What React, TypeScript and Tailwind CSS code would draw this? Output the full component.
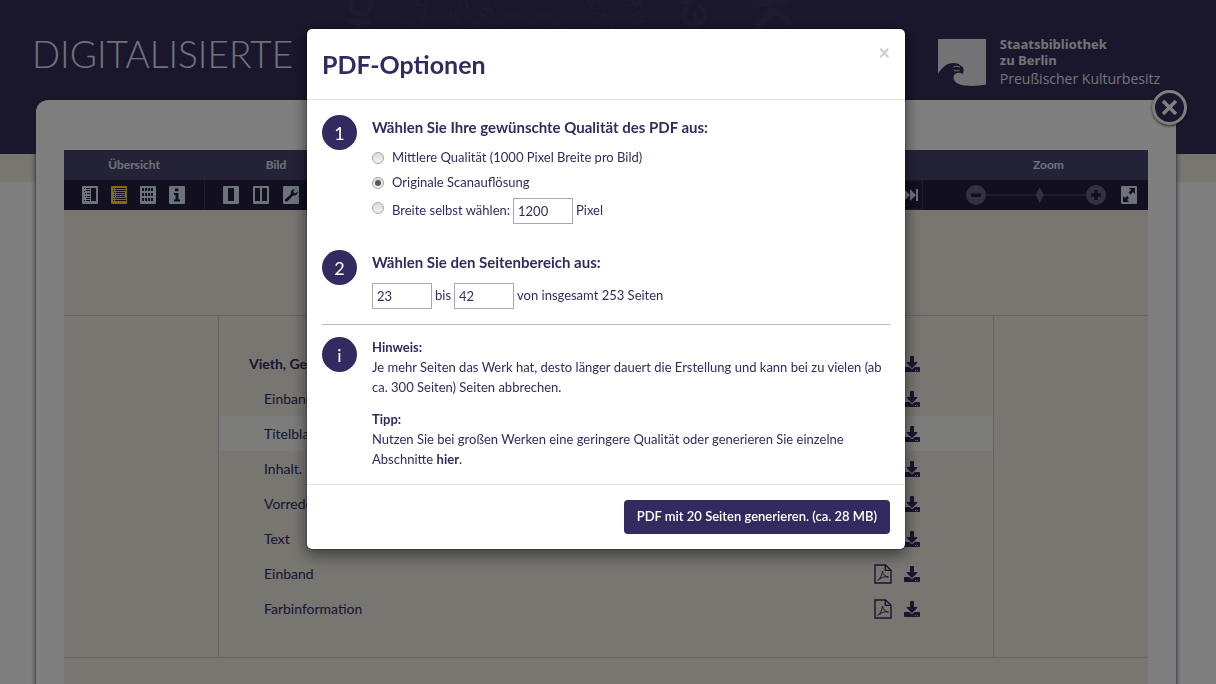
import React, { useState } from 'react';
import { FaDownload } from 'react-icons/fa';

interface TocEntry {
  title: string;
  top?: boolean;
  active?: boolean;
}

const TOC: TocEntry[] = [
  { title: 'Vieth, Gerhard Ulrich Anton', top: true },
  { title: 'Einband' },
  { title: 'Titelblatt', active: true },
  { title: 'Inhalt.' },
  { title: 'Vorrede' },
  { title: 'Text' },
  { title: 'Einband' },
  { title: 'Farbinformation' },
];

/* Faint circles of script samples behind the page title */
const ScriptRings: React.FC = () => (
  <svg className="absolute left-1/2 top-0 -translate-x-1/2" width="600" height="154" viewBox="308 0 600 154" fill="#413a66" fontFamily="'Liberation Sans', 'Noto Sans CJK JP', sans-serif" aria-hidden="true">
    <defs>
      <path id="ring-inner" d="M512 36a16 9 0 0 1 32 0" />
      <path id="ring-middle" d="M495 36a33 21 0 0 1 66 0" />
      <path id="ring-outer" d="M478 32C482 20 492 9 506 -3" />
    </defs>
    <g opacity="0.7">
      <text fontSize="7"><textPath href="#ring-inner" startOffset="9">былоэ</textPath></text>
      <text fontSize="11"><textPath href="#ring-middle" startOffset="3">ийклмнопрстуф</textPath></text>
      <text fontSize="17"><textPath href="#ring-outer">wxyz</textPath></text>
      <text fontSize="34" fontWeight="bold" transform="translate(369 43) rotate(-85)">HO</text>
      <text fontSize="18" transform="translate(420 32) rotate(-78)">七上</text>
      <text fontSize="17" transform="translate(456 29) rotate(-62)">チッ</text>
      <text fontSize="17" transform="translate(584 -4) rotate(62)">エオオ</text>
      <text fontSize="16" transform="translate(626 -4) rotate(76)">怀世</text>
      <text fontSize="34" fontWeight="bold" transform="translate(676 -11) rotate(76)">6Э</text>
      <text fontSize="52" fontWeight="bold" transform="translate(751 -3) rotate(82)">K</text>
    </g>
  </svg>
);

const LibraryLogo: React.FC = () => (
  <svg className="mt-[3px]" width="48" height="48" viewBox="0 0 48 48" fill="#e6e6ea" aria-hidden="true">
    <path d="M0 0h48v45.500c-7 1.500-17 2-24 .5-5.500-1.200-8.500-4-8.500-7.500 0-2.500 1.500-4.300 4-4.600 2-.2 3.600-.1 4.600 1.100l1-.4c.8-2.600.8-5.200-.6-6.900l-2-1.200c-1.500-1.700-4-2.500-7.500-2.500-6 0-10 4-15 10.500z" />
    <path d="M15.500 27.800c2.500-.8 4.500-.5 6.500.2M16 31.500c2 .5 4 .3 5.500-.2" stroke="#e6e6ea" strokeWidth="1" fill="none" />
  </svg>
);

const PdfIcon: React.FC = () => (
  <svg width="18" height="20" viewBox="0 0 18 20" fill="none" stroke="#332b5f" strokeWidth="1.400" aria-hidden="true">
    <path d="M1 1h10.500L17 6.200V19H1z" />
    <path d="M11.300 1v5.400H17" />
    <path d="M3.500 16.500c2.500-1.300 4.600-5.200 5-9.500.5 3.500 2.500 5.500 6 6-3.500-.7-6.500.1-9 2.500" strokeWidth="1" />
  </svg>
);

/* White 16x18 tile with a dark drawing on it */
const ToolButton: React.FC<{ label: string; active?: boolean; children: React.ReactNode }> = ({ label, active, children }) => (
  <button type="button" aria-label={label} className={`h-[18px] w-4 shrink-0 overflow-hidden rounded-[1px] ${active ? 'bg-[#fcdc20]' : 'bg-[#dbe7f7]'}`}>
    <svg width="16" height="18" viewBox="0 0 16 18" fill="#241e40" className="block">
      {children}
    </svg>
  </button>
);

const Toolbar: React.FC = () => (
  <div className="grid grid-cols-[140px_144px_1fr_225px] text-[12px] font-bold text-[#dbe7f7]">
    <div className="bg-[#48446c] text-center leading-[30px]">Übersicht</div>
    <div className="bg-[#48446c] text-center leading-[30px]">Bild</div>
    <div className="bg-[#48446c] text-center leading-[30px]">Seite</div>
    <div className="bg-[#48446c] pl-[26px] text-center leading-[30px]">Zoom</div>

    <div className="flex h-[30px] items-center gap-[13px] bg-[#241e40] pl-[18px]">
      <ToolButton label="Inhalt und Bild">
        <path d="M2 2h1v1H2zM2 5h1v1H2zM2 14h1v1H2zM4 2h4v1H4zM4 4h4v1H4zM3 7h1v1H3zM5 7h3v1H5zM3 10h1v1H3zM5 10h3v1H5zM4 12h4v1H4zM4 14h4v1H4zM9 2h5v13H9z" />
      </ToolButton>
      <ToolButton label="Inhalt" active>
        <path d="M2 2h1v1H2zM4 2h11v1H4zM2 4h1v1H2zM4 4h11v1H4zM3 6h1v1H3zM5 6h9v1H5zM3 8h1v1H3zM5 8h9v1H5zM3 10h1v1H3zM5 10h9v1H5zM2 12h1v1H2zM4 12h11v1H4zM2 14h1v1H2zM4 14h11v1H4z" />
      </ToolButton>
      <ToolButton label="Vorschau">
        <path d="M2 2h2v3H2zM5 2h2v3H5zM8 2h2v3H8zM11 2h2v3h-2zM2 7h2v3H2zM5 7h2v3H5zM8 7h2v3H8zM11 7h2v3h-2zM2 12h2v3H2zM5 12h2v3H5zM8 12h2v3H8zM11 12h2v3h-2z" />
      </ToolButton>
      <ToolButton label="Information">
        <path d="M6 2.500h3.500v2.800H6zM5 7h4.500v6.500H11V15.500H5v-2h1.500V9H5z" />
      </ToolButton>
    </div>
    <div className="flex h-[30px] items-center gap-[14px] border-l border-[#3b3659] bg-[#241e40] pl-[18px]">
      <ToolButton label="Einzelseite">
        <path d="M5 2h6v13H5z" />
      </ToolButton>
      <ToolButton label="Doppelseite">
        <path d="M2 2h5v13H2zM9 2h5v13H9z" />
      </ToolButton>
      <ToolButton label="Werkzeuge">
        <path d="M2 13.500l6-5.500c-.6-2.500.8-5 4-5l-1.800 2 .6 1.800 2 .4L15 5c.2 3-2 5-4.800 4.600l-5.700 5.600c-1.300 1-3.200-.4-2.500-1.700z" />
      </ToolButton>
    </div>
    <div className="flex h-[30px] items-center justify-end border border-[#3b3659] bg-[#241e40] pr-1">
      <button type="button" aria-label="Letzte Seite">
        <svg width="14" height="12" viewBox="0 0 14 12" fill="#dbe7f7">
          <path d="M0 0l6 6-6 6zM6 0l6 6-6 6zM12 0h2v12h-2z" />
        </svg>
      </button>
    </div>
    <div className="flex h-[30px] items-center bg-[#241e40] pr-[11px] pl-[43px]">
      <button type="button" aria-label="Verkleinern" className="shrink-0">
        <svg width="20" height="20" viewBox="0 0 20 20"><circle cx="10" cy="10" r="10" fill="#67637f" /><path d="M5 8.500h10v3.500H5z" fill="#241e40" /></svg>
      </button>
      <input
        type="range"
        aria-label="Zoomstufe"
        defaultValue={54}
        className="h-4 min-w-0 flex-1 appearance-none bg-transparent [&::-webkit-slider-runnable-track]:h-0.5 [&::-webkit-slider-runnable-track]:bg-[#3b3659] [&::-webkit-slider-thumb]:-mt-[7px] [&::-webkit-slider-thumb]:h-4 [&::-webkit-slider-thumb]:w-2 [&::-webkit-slider-thumb]:appearance-none [&::-webkit-slider-thumb]:bg-[#67637f] [&::-webkit-slider-thumb]:[clip-path:polygon(50%_0,100%_50%,50%_100%,0_50%)]"
      />
      <button type="button" aria-label="Vergrößern" className="mr-[15px] shrink-0">
        <svg width="20" height="20" viewBox="0 0 20 20"><circle cx="10" cy="10" r="10" fill="#67637f" /><path d="M5 8.200h3.200V5h3.600v3.200H15v3.600h-3.200V15H8.200v-3.200H5z" fill="#241e40" /></svg>
      </button>
      <ToolButton label="Vollbild">
        <path d="M8 2h6v6l-2-2-2.500 2.500L7.500 6.500 10 4zM2 10l2 2 2-2.200L8 12l-2 2 2 2H2z" />
      </ToolButton>
    </div>
  </div>
);

const StepBadge: React.FC<{ children: React.ReactNode }> = ({ children }) => (
  <div className="flex h-[35px] w-[35px] shrink-0 items-center justify-center rounded-full bg-[#332b5f] text-[18px] leading-none text-white">
    {children}
  </div>
);

const inputClass = 'h-[26px] w-[60px] border border-[#a9a9a9] bg-white px-1 text-[13px]';
const radioClass =
  'grid h-3 w-3 shrink-0 appearance-none place-content-center rounded-full border border-[#a6a6a6] bg-linear-to-b from-[#dcdcdc] to-[#f2f2f2] checked:before:block checked:before:h-1.5 checked:before:w-1.5 checked:before:rounded-full checked:before:bg-[#5a5a5a]';

const PdfDialog: React.FC = () => {
  const [quality, setQuality] = useState('original');

  return (
    <div role="dialog" aria-labelledby="pdf-title" className="mx-auto mt-7 w-[600px] rounded-md border border-black/20 bg-white bg-clip-padding text-[13px] text-[#332b5f] shadow-[0_5px_15px_rgba(0,0,0,0.5)]">
      <div className="flex items-start justify-between border-b border-[#e5e5e5] p-[15px]">
        <h2 id="pdf-title" className="text-[25px] leading-10 font-bold">PDF-Optionen</h2>
        <button type="button" aria-label="Schließen" className="text-[20px] leading-4 font-bold text-[#ccc]">×</button>
      </div>

      <div className="p-[15px]">
        <div className="flex gap-[15px]">
          <StepBadge>1</StepBadge>
          <fieldset>
            <legend className="mb-1.5 text-[15px] leading-6 font-bold">Wählen Sie Ihre gewünschte Qualität des PDF aus:</legend>
            <label className="flex h-[25px] items-center gap-2">
              <input type="radio" name="quality" className={radioClass} checked={quality === 'medium'} onChange={() => setQuality('medium')} />
              Mittlere Qualität (1000 Pixel Breite pro Bild)
            </label>
            <label className="flex h-[25px] items-center gap-2">
              <input type="radio" name="quality" className={radioClass} checked={quality === 'original'} onChange={() => setQuality('original')} />
              Originale Scanauflösung
            </label>
            <div className="mt-[3px] flex h-[26px] items-center gap-[3px]">
              <label className="flex h-full items-center gap-2">
                <input type="radio" name="quality" className={`${radioClass} mt-1 self-start`} checked={quality === 'custom'} onChange={() => setQuality('custom')} />
                Breite selbst wählen:
              </label>
              <input type="text" id="pdf-width" defaultValue="1200" className={inputClass} />
              <label htmlFor="pdf-width">Pixel</label>
            </div>
          </fieldset>
        </div>

        <div className="mt-[26px] flex gap-[15px]">
          <StepBadge>2</StepBadge>
          <div>
            <h3 className="mb-[9px] text-[15px] leading-6 font-bold">Wählen Sie den Seitenbereich aus:</h3>
            <div className="flex items-center gap-[3px]">
              <input type="text" aria-label="Erste Seite" defaultValue="23" className={inputClass} />
              <label htmlFor="page-to">bis</label>
              <input type="text" id="page-to" defaultValue="42" className={inputClass} />
              <span>von insgesamt 253 Seiten</span>
            </div>
          </div>
        </div>

        <hr className="mt-[15px] mb-3 border-[#bbb]" />

        <div className="flex gap-[15px]">
          <StepBadge>i</StepBadge>
          <div className="leading-5">
            <p className="mb-3">
              <b>Hinweis:</b>
              <br />
              Je mehr Seiten das Werk hat, desto länger dauert die Erstellung und kann bei zu vielen (ab
              <br />
              ca. 300 Seiten) Seiten abbrechen.
            </p>
            <p>
              <b>Tipp:</b>
              <br />
              Nutzen Sie bei großen Werken eine geringere Qualität oder generieren Sie einzelne
              <br />
              Abschnitte <a href="#abschnitte" className="font-bold">hier</a>.
            </p>
          </div>
        </div>
      </div>

      <div className="flex justify-end border-t border-[#e5e5e5] p-[15px]">
        <button type="button" className="h-[34px] rounded bg-[#332b5f] px-[13px] font-semibold text-white">
          PDF mit 20 Seiten generieren. (ca. 28 MB)
        </button>
      </div>
    </div>
  );
};

export default function App() {
  return (
    <div className="h-screen overflow-hidden bg-white font-['Lato',sans-serif] text-[#332b5f]">
      <header className="relative h-[154px] bg-[#352d59] pt-[34px] pr-10 pl-8">
        <ScriptRings />
        <div className="relative flex items-start justify-between">
          <h1 className="text-[37px] leading-10 font-light text-[#dbe7f7]">DIGITALISIERTE</h1>
          <a href="#start" className="mt-0.5 mr-4 flex gap-3.5 font-['Open_Sans',sans-serif] text-[13px] leading-4 text-[#e6e6ea]">
            <LibraryLogo />
            <span>
              <b>Staatsbibliothek<br />zu Berlin</b>
              <span className="mt-[3px] block text-[14px] leading-4">Preußischer Kulturbesitz</span>
            </span>
          </a>
        </div>
      </header>
      <div className="h-7 bg-[#eeece2]" />

      {/* Work view */}
      <main className="relative mr-10 ml-9 -mt-[82px] rounded-t-xl bg-white px-7 pt-[50px] shadow-[0_0_5px_#352d59]">
        <button type="button" aria-label="Ansicht schließen" className="absolute -top-2.5 -right-[11px] flex h-[35px] w-[35px] items-center justify-center rounded-full border-[3px] border-white bg-[#352d59] shadow-[0_1px_3px_rgba(0,0,0,0.7)]">
          <svg width="15" height="15" viewBox="0 0 15 15" stroke="#fff" strokeWidth="3.600"><path d="M1 1l13 13M14 1L1 14" /></svg>
        </button>
        <Toolbar />
        <div className="bg-[#eeece2] pt-[105px] pb-24">
          <div className="grid grid-cols-[154px_1fr_154px] border-y border-[#c8c6bf]">
            <div />
            <ul className="border-x border-[#c8c6bf] pt-[30px] pb-[31px] text-[14px]">
              {TOC.map((entry, i) => (
                <li key={i} className={`flex h-[35px] items-center pr-[73px] ${entry.top ? 'pl-[30px] font-bold' : 'pl-[45px]'} ${entry.active ? 'bg-[#f9f8f4]' : ''}`}>
                  <a href={`#toc-${i}`} className="flex-1">{entry.title}</a>
                  <a href={`#pdf-${i}`} aria-label="PDF" className="mr-3"><PdfIcon /></a>
                  <a href={`#download-${i}`} aria-label="Download"><FaDownload size={16} /></a>
                </li>
              ))}
            </ul>
            <div />
          </div>
        </div>
      </main>

      {/* Backdrop and dialog */}
      <div className="fixed inset-0 bg-black/50 pr-1">
        <PdfDialog />
      </div>
    </div>
  );
}
